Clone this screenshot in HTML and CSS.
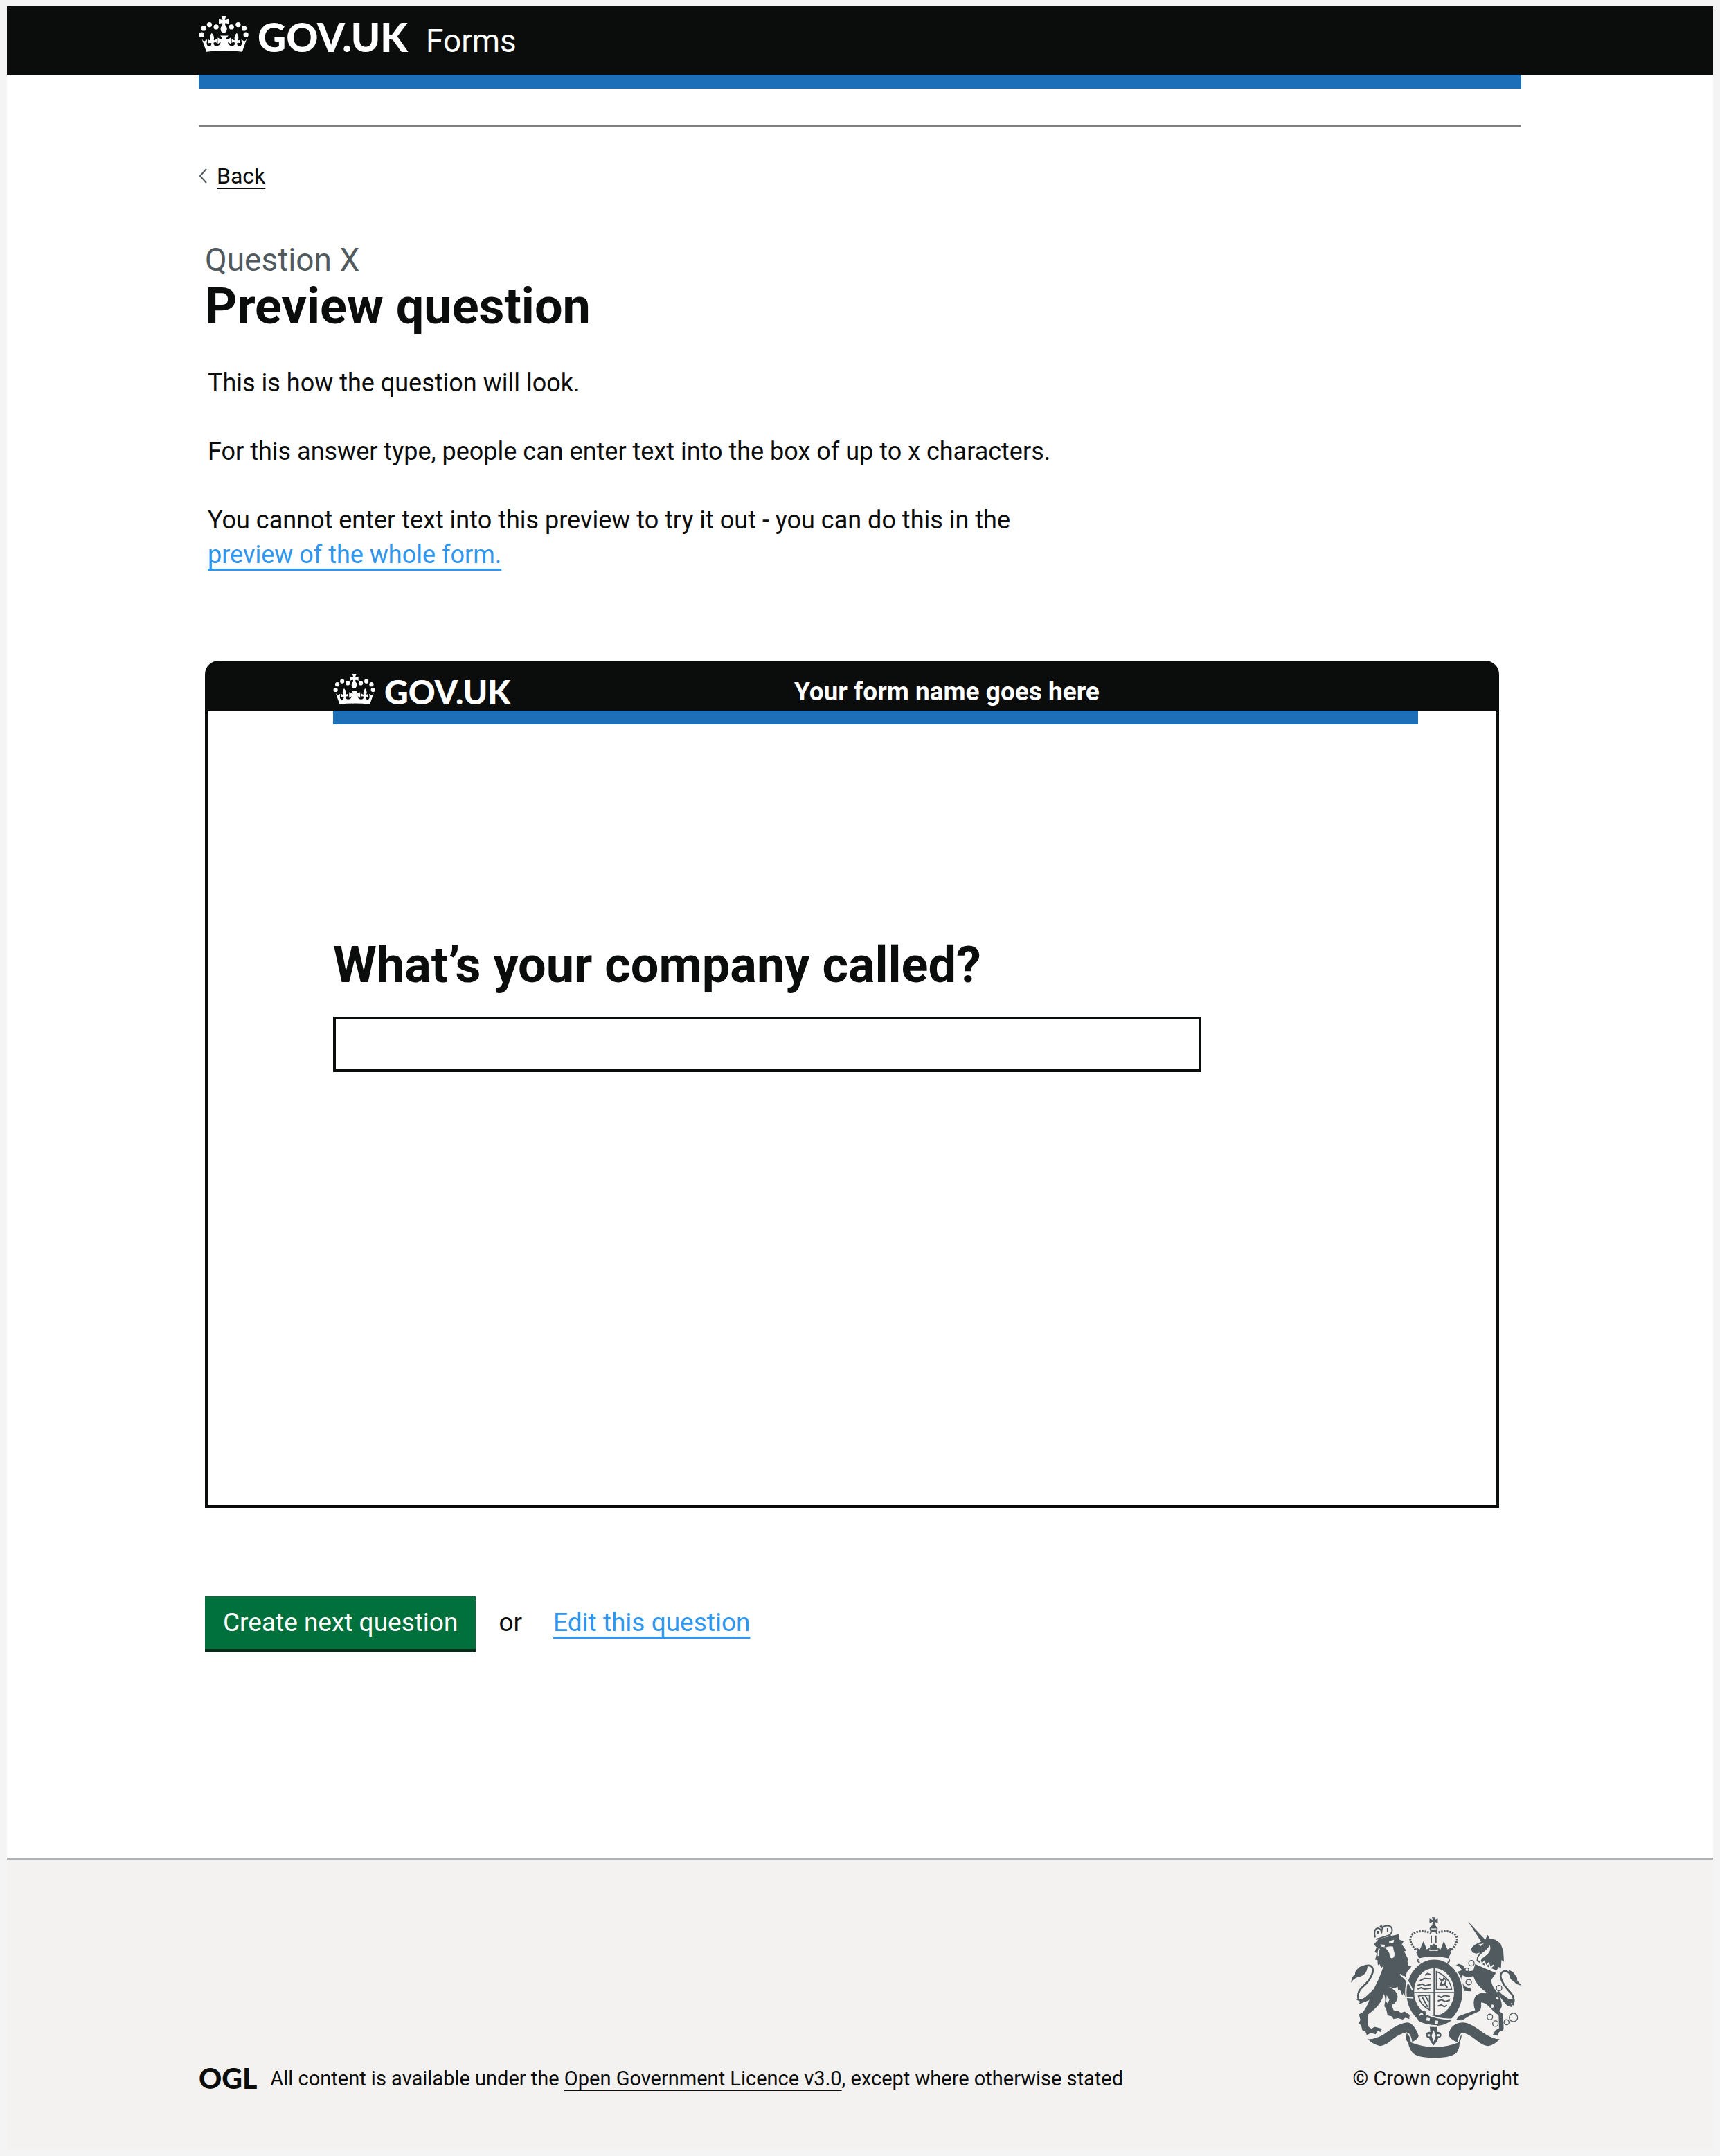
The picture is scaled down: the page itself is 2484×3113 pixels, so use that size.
FILE: index.html
```html
<!DOCTYPE html>
<html lang="en">
<head>
<meta charset="utf-8">
<meta name="viewport" content="width=device-width, initial-scale=1">
<title>Preview question - GOV.UK Forms</title>
<link rel="stylesheet" href="styles.css">
</head>
<body>
<svg class="sprite" aria-hidden="true">
  <symbol id="crown" viewBox="54 50 216 157">
    <circle cx="66" cy="132" r="11"/><circle cx="75" cy="104" r="11"/><circle cx="100" cy="88" r="11"/><circle cx="129" cy="98" r="11"/>
    <circle cx="196" cy="98" r="11"/><circle cx="225" cy="88" r="11"/><circle cx="251" cy="104" r="11"/><circle cx="259" cy="132" r="11"/>
    <path d="M152 50h21l-6 17q9 2 17-4v23q-8-6-16-4l1 9q9 8 7 20-4 13-14 13t-13-13q-2-12 7-20l1-9q-8-2-16 4V63q8 6 17 4z"/>
    <path d="M66 148q6 12 12 12l12-7-2 15q0 14 11 15 9-1 10-14-7-5-14 1v-17q6 5 10 3-7-18 5-31 13 12 9 31 6 1 13-7v19q-7-6-14-1 0 14 13 14 15 0 18-16-7 2-13 9v-30q10 8 20 7-2-9-9-15h36q-9 6-10 15 10 1 20-7v30q-6-7-13-9 3 16 18 16 13 0 13-14-7-5-14 1v-19q7 8 13 7-4-19 9-31 12 13 5 31 4 2 10-3v17q-7-6-14-1 1 13 10 14 11-1 11-15l-2-15 12 7q6 0 12-12l-20 58q-78-8-156 0z"/>
  </symbol>
</svg>

<div class="page">
  <header class="site-header">
    <div class="container brand">
      <a class="brand-link" href="#"><svg class="crown" aria-hidden="true"><use href="#crown"/></svg><span class="wordmark">GOV.UK</span></a>
      <a class="product" href="#">Forms</a>
    </div>
  </header>

  <div class="container">
    <div class="bar"></div>
    <hr class="rule">
    <a class="back" href="#"><svg class="chevron" viewBox="0 0 12 22" aria-hidden="true"><path d="M11 1 2 11l9 10"/></svg><span class="back-text">Back</span></a>

    <main class="content">
      <p class="caption">Question X</p>
      <h1 class="title">Preview question</h1>
      <div class="intro">
        <p>This is how the question will look.</p>
        <p>For this answer type, people can enter text into the box of up to x characters.</p>
        <p>You cannot enter text into this preview to try it out - you can do this in the<br><a class="link" href="#">preview of the whole form.</a></p>
      </div>

      <section class="preview" aria-label="Question preview">
        <div class="preview-header">
          <div class="brand-link"><svg class="crown" aria-hidden="true"><use href="#crown"/></svg><span class="wordmark">GOV.UK</span></div>
          <span class="form-name">Your form name goes here</span>
        </div>
        <div class="preview-body">
          <div class="bar"></div>
          <label class="question" for="answer">What’s your company called?</label>
          <input class="answer" id="answer" type="text" readonly>
        </div>
      </section>

      <div class="actions">
        <button class="button" type="button">Create next question</button>
        <span>or</span>
        <a class="link" href="#">Edit this question</a>
      </div>
    </main>
  </div>

  <footer class="site-footer">
    <div class="container footer-row">
      <div class="licence">
        <span class="ogl">OGL</span>
        <span>All content is available under the <a class="footer-link" href="#">Open Government Licence v3.0</a>, except where otherwise stated</span>
      </div>
      <div class="copyright">
        <svg class="crest" viewBox="60 54 742 612" aria-hidden="true">
          <!-- ribbon -->
          <path class="ink" d="M136 584q46 0 90-36 46-34 80-37 30 0 51 58-4 16-32 29 50 20 102 20t102-20q-38-14-42-34 8-50 61-53 30 0 80 38 46 34 80 34-24 28-50 30-24-2-54-28-36-28-59-30-2 26-10 44-2 30-14 44-24 20-94 22-76-2-96-22-14-16-20-44-16-18-4-46-36 8-62 30-30 28-55 30-30-6-54-29z"/>
          <path class="cut" d="M308 556q14 10 18 40M548 556q-16 10-20 40"/>
          <!-- central badge -->
          <path class="ink" d="M405 530h34l-3 22q18-2 20 14-2 12-14 12-6 20-20 32-14-12-20-32-12 0-14-12 2-16 20-14z"/>
          <path class="hole" d="M422 544l9 24-9 28-9-28zM396 562h10v9h-10zM438 562h10v9h-10z"/>
          <!-- tails -->
          <path class="line" d="M112 270q50-20 46 22-8 34-50 70-20 22-12 50M104 418q34-6 58-46"/>
          <path class="ink" d="M63 338q4-28 18-36-4-12 20-32 16-8 34-4-2 42-42 48-18 6-30 24zM80 408q26 8 44-6l42-38-24 50-44 18 4-12z"/>
          <path class="line" d="M754 300q-20-20-36-6-12 12 2 40 12 24 36 48 20 22 10 54M700 376l50 58"/>
          <path class="ink" d="M802 350q-22-2-32-18-22-6-22-48 20 4 28 22 10 8 8 22zM700 376l46 32 28 4-4 18-14-4 8 18q-20 0-34-18l-30-38z"/>
          <!-- lion -->
          <path class="ink" d="M162 172L184 148L270 128L274 152L292 158L284 172L304 200L294 202L312 238L308 244L312 266L326 268L306 292L300 312L330 358L336 400L318 410L312 394L302 408L292 382L286 394L276 368L268 372L266 356L252 362L228 356Q262 370 266 400Q264 424 240 436L248 458L270 462L280 470L296 464L318 478L316 496L300 490L288 498L268 492L248 496L240 484L222 480L216 452L208 440L212 414Q210 388 204 388Q200 430 138 476Q132 510 140 530L152 538L166 530L198 538L192 552L180 548L170 562L150 556L132 566L126 550L112 544L108 526L98 514L104 500L98 476L116 466Q146 420 150 386Q184 330 206 262L194 276L188 258L180 262L178 240L168 238L176 210L166 206L174 184Z"/>
          <path class="hole" d="M190 172l22 2-4 10-12-2zM228 158l22-6-2 12-18 4zM210 186q20-8 36-4l2 14q6 14 4 24-4 12-12 12-10-2-10-20l-6-12zM218 392l12 20-8 16-6-8z"/>
          <path class="fine" d="M168 142q-8-40 14-40 12 2 14 20 0-26 16-30 28-6 30 18 0 8-6 16M172 150l64-20M194 86v16M188 94h12M180 114v14M222 102v16"/>
          <path class="cut" d="M276 302q44 32 60 96M186 190q-6 16-4 32"/>
          <!-- unicorn -->
          <path class="ink" d="M571 72L646 152L656 130L664 146L690 152L712 168L724 200L727 248L716 240L714 276L704 270L692 290L640 262L608 244L610 228L622 208L606 212L590 207L583 190L600 174L628 160Z"/>
          <path class="ink" d="M602 258L692 296L672 326Q672 350 694 376Q716 404 718 440Q712 456 706 462L724 474L722 500Q728 530 724 545L706 552L700 568L678 566L690 545L706 536L704 480Q690 470 676 456Q650 425 628 424Q630 455 620 462L580 480L545 502L520 500L530 484L556 474L602 458Q588 420 604 396Q620 380 652 382Q606 350 594 310L572 316L545 306Q536 330 556 354L582 364L584 376L556 374L524 310L528 290L545 284L536 270L518 264L530 256L550 264L566 290L594 286Z"/>
          <path class="hole" d="M616 172l24-4-14 12zM666 176q10 28-22 48-14 8-20 22l-12-6q2-18 22-32 14-8 32-32z"/>
          <path class="cut" d="M604 250l94 40M622 238l8 20 12-12 6 20 12-12 8 20 14-12"/>
          <g class="chain"><circle cx="586" cy="254" r="12"/><circle cx="566" cy="282" r="8"/><circle cx="574" cy="336" r="12"/><circle cx="706" cy="362" r="12"/><circle cx="698" cy="406" r="8"/><circle cx="676" cy="440" r="9"/><circle cx="666" cy="487" r="12"/><circle cx="690" cy="516" r="12"/><circle cx="738" cy="510" r="11"/><circle cx="768" cy="489" r="18"/></g>
          <!-- garter and shield -->
          <ellipse class="garter" cx="425" cy="381" rx="124" ry="146"/>
          <ellipse class="hole" cx="424" cy="378" rx="87" ry="103"/>
          <path class="thin" d="M424 276v206M337 381h174M434 290q58 24 66 78h-66zM356 396q8 40 48 60V392z"/>
          <path class="fine" d="M362 330l20-10 28 2M352 350l20-6 14 8 24-6M352 366l16-6 14 6 28-4M384 306l12-8 14 6M440 396l16 6 12-8 24 4M440 418l16-6 16 8 20-6M440 440l14-6 14 8 12-6M446 318l12 14-8 18 20-4 12 14M460 332l6-14 10 8-6 20M372 400l24 44M386 396l14 24"/>
          <path class="ink" d="M348 482l22-22 18 4 4 14 110 22q-30 26-72 26-46-4-74-22z"/>
          <path class="cut" d="M330 372q-12-36-40-64M304 402l30 2M346 504q40 22 92 22M388 474q60 26 116 22"/>
          <path class="hole" d="M392 490l14 2-2 12-14-2zM428 502l14 2-2 14-14-2zM356 478l14-10 8 8-16 6z"/>
          <!-- royal crown -->
          <path class="ink" d="M346 206q76-12 152 0l-12 26q-64-14-128 0z"/>
          <path class="ink" d="M350 208l-4-22 16 8 16-36 14 36 14-8-4 22zM494 208l4-22-16 8-16-36-14 36-14-8 4 22zM406 196v-22l12 4v-8h8v8l12-4v22z"/>
          <path class="thin" d="M356 234q-8 16 6 16M488 234q8 16-6 16M412 134v32M432 134v32"/>
          <path class="pearls" d="M344 196q-38-44-14-68 34-24 82-4M500 196q38-44 14-68-34-24-82-4"/>
          <path class="ink" d="M414 54h16l-4 12 14-6v20l-14-6 2 14 12 14-4 18h-28l-4-18 12-14 2-14-14 6V60l14 6z"/>
          <path class="hole" d="M410 103h24v4h-24z"/>
        </svg>
        <a class="copyright-link" href="#">© Crown copyright</a>
      </div>
    </div>
  </footer>
</div>
</body>
</html>
```
FILE: styles.css
```css
:root {
  --black: #0b0c0c;
  --blue: #1d70b8;
  --link: #2e96ee;
  --grey: #505a5f;
  --footer: #f3f2f1;
}

* { box-sizing: border-box; }

body {
  margin: 0;
  padding: 9px 10px 10px;
  background: #f4f4f4;
  color: var(--black);
  font-family: Roboto, "Liberation Sans", sans-serif;
  font-size: 36px;
  line-height: 50px;
}

p, h1 { margin: 0; }
a { color: inherit; }
.sprite { position: absolute; width: 0; height: 0; }
.page { background: #fff; }

.container {
  max-width: 1910px;
  margin: 0 auto;
}

/* Header */
.site-header {
  padding: 14px 0 19px;
  background: var(--black);
  color: #fff;
}

.brand, .brand-link {
  display: flex;
  align-items: baseline;
}
.brand { gap: 26px; }
.brand-link {
  gap: 13px;
  color: #fff;
  text-decoration: none;
}

.crown {
  width: 72px;
  height: 52px;
  margin-bottom: -7px;
  fill: currentColor;
}

.wordmark {
  font: 900 57px/60px Lato, "Liberation Sans", sans-serif;
}

.product {
  font-size: 46px;
  line-height: 60px;
  text-decoration: none;
}

.bar {
  height: 20px;
  background: var(--blue);
}

.rule {
  height: 4px;
  margin: 52px 0 50px;
  border: 0;
  background: #808080;
}

.back {
  display: flex;
  align-items: center;
  gap: 14px;
  width: fit-content;
  font-size: 32px;
  line-height: 40px;
  text-decoration: none;
}
.chevron {
  width: 12px;
  height: 22px;
  fill: none;
  stroke: var(--grey);
  stroke-width: 2;
}
.back-text, .footer-link, .link {
  text-decoration: underline;
  text-decoration-thickness: 2px;
  text-underline-offset: 6px;
  text-decoration-skip-ink: none;
}
.link {
  color: var(--link);
  text-decoration-thickness: 3px;
  text-underline-offset: 8px;
}

/* Content */
.content { padding: 71px 32px 298px 9px; }

.caption {
  color: var(--grey);
  font-size: 46px;
  line-height: 60px;
}
.title {
  font-size: 72px;
  line-height: 76px;
}
.intro {
  display: grid;
  gap: 49px;
  padding: 47px 0 128px 4px;
}

/* Question preview */
.preview {
  overflow: hidden;
  border: 4px solid var(--black);
  border-radius: 20px 20px 0 0;
  background: linear-gradient(var(--black), var(--black)) top / 100% 40px no-repeat border-box;
}
.preview-header {
  display: grid;
  grid-template-columns: 17fr 23fr;
  padding: 14px 113px 0 181px;
  background: var(--black);
  color: #fff;
}
.preview-header .crown {
  width: 61px;
  height: 44px;
  margin-bottom: -5px;
}
.preview-header .wordmark {
  font-size: 48px;
  line-height: 54px;
}
.form-name {
  font-size: 37px;
  font-weight: 700;
  line-height: 54px;
}
.preview-body { padding: 0 113px 625px 181px; }
.question {
  display: block;
  margin: 308px 0 34px;
  font-size: 72px;
  font-weight: 700;
  line-height: 80px;
}
.answer {
  display: block;
  width: 80%;
  height: 80px;
  padding: 0 16px;
  border: 4px solid var(--black);
  border-radius: 0;
  background: #fff;
  font: inherit;
}

.actions {
  display: flex;
  align-items: flex-start;
  gap: 33px;
  padding-top: 128px;
  font-size: 37px;
  line-height: 76px;
}
.actions .link { margin-left: 12px; }
.button {
  padding: 0 26px;
  border: 0;
  border-bottom: 4px solid #002d18;
  background: #00703c;
  color: #fff;
  font: inherit;
}

/* Footer */
.site-footer {
  padding: 82px 0;
  border-top: 3px solid #b1b4b6;
  background: var(--footer);
  font-size: 29px;
  line-height: 40px;
}
.footer-row {
  display: flex;
  justify-content: space-between;
  align-items: flex-end;
}
.licence {
  display: flex;
  align-items: center;
  gap: 19px;
}
.ogl {
  font: 900 41px/40px Lato, "Liberation Sans", sans-serif;
}
.copyright {
  display: flex;
  flex-direction: column;
  align-items: center;
  gap: 9px;
}
.copyright-link { text-decoration: none; }

.crest { width: 247px; height: 204px; }
.ink { fill: var(--grey); }
.hole { fill: var(--footer); }
.cut, .line, .thin, .fine, .pearls { fill: none; stroke: var(--grey); }
.cut { stroke: var(--footer); stroke-width: 6; }
.line { stroke-width: 8; }
.thin { stroke-width: 5; }
.fine { stroke-width: 6; stroke-linejoin: round; }
.pearls { stroke-width: 9; stroke-dasharray: 7 5; }
.chain { fill: var(--footer); stroke: var(--grey); stroke-width: 4; }
.garter { fill: var(--grey); stroke: var(--footer); stroke-width: 6; }
```
